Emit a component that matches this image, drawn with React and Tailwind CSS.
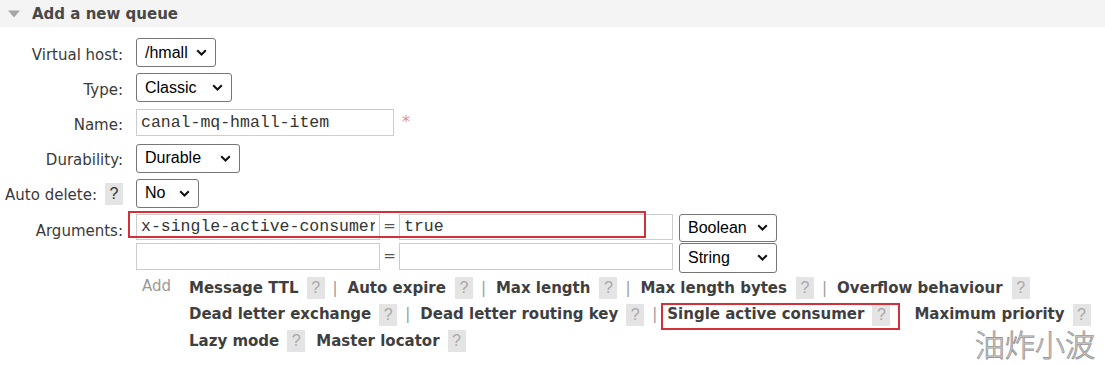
import React from "react";

// small chevron used by the fake selects
const Chevron = () => (
  <svg width="11" height="7" viewBox="0 0 11 7" className="shrink-0">
    <path d="M1.2 1.2l4.3 4.3 4.3-4.3" fill="none" stroke="#111" strokeWidth="2" />
  </svg>
);

const Select = ({ children, className = "" }) => (
  <div
    className={`flex items-center justify-between border border-[#767676] rounded-[3px] bg-white pl-[8px] pr-[8px] text-[16px] text-black font-['Liberation_Sans',Arial,sans-serif] ${className}`}
  >
    <span>{children}</span>
    <Chevron />
  </div>
);

const Help = ({ dark = false, className = "" }) => (
  <span
    className={`inline-flex items-center justify-center w-[18px] h-[22px] bg-[#e4e4e4] text-[16px] font-normal font-['Liberation_Sans',Arial,sans-serif] ${
      dark ? "text-[#333]" : "text-[#a8a8a8]"
    } ${className}`}
  >
    ?
  </span>
);

const Sep = () => <span className="ml-[8px] w-[5px] text-center font-normal text-[#999]">|</span>;

const Row = ({ label, children, className = "", align = "items-center" }) => (
  <div className={`flex ${align} ${className}`}>
    <div className="w-[123px] flex justify-end items-center pt-[5px] text-[#3a3a3a]">{label}</div>
    <div className={`ml-[13px] flex ${align}`}>{children}</div>
  </div>
);

const TextBox = ({ value = "", className = "" }) => (
  <input
    readOnly
    value={value}
    className={`border border-[#cccccc] bg-white px-[4px] outline-none text-[16.5px] text-[#333] font-['Liberation_Mono','Courier_New',monospace] ${className}`}
  />
);

export default function App() {
  return (
    <div className="relative w-[1105px] h-[366px] overflow-hidden bg-white text-[15px] text-[#444] font-['DejaVu_Sans',Verdana,sans-serif]">
      {/* section header */}
      <div className="flex items-center h-[27px] bg-[#f4f4f4]">
        <svg className="ml-[8px]" width="12" height="8" viewBox="0 0 12 8">
          <path d="M0 0.5h12L6 7.5z" fill="#a5a5a5" />
        </svg>
        <h2 className="ml-[12px] pt-[2px] font-bold text-[15px] text-[#484848]">Add a new queue</h2>
      </div>

      <div className="flex flex-col">
        <Row label="Virtual host:" className="mt-[11px]">
          <Select className="w-[80px] h-[29px]">/hmall</Select>
        </Row>
        <Row label="Type:" className="mt-[6px]">
          <Select className="w-[96px] h-[29px]">Classic</Select>
        </Row>
        <Row label="Name:" className="mt-[7px]" align="items-start">
          <TextBox value="canal-mq-hmall-item" className="w-[258px] h-[27px]" />
          <span className="ml-[8px] mt-[1px] text-[#ef8a8a] text-[16px]">*</span>
        </Row>
        <Row label="Durability:" className="mt-[7px]">
          <Select className="w-[104px] h-[29px]">Durable</Select>
        </Row>
        <Row
          label={
            <>
              <span>Auto delete:</span>
              <Help dark className="ml-[8px] -mt-[4px]" />
            </>
          }
          className="mt-[6px]"
        >
          <Select className="w-[63px] h-[29px]">No</Select>
        </Row>

        <div className="flex items-start mt-[6px]">
          <div className="w-[123px] h-[26px] flex justify-end items-center pt-[9px] text-[#3a3a3a]">Arguments:</div>
          <div className="ml-[13px] flex flex-col">
            <div className="relative flex items-start">
              <TextBox value="x-single-active-consumer" className="w-[244px] h-[26px]" />
              <span className="w-[19px] h-[26px] flex items-center justify-center text-[#555]">=</span>
              <TextBox value="true" className="w-[274px] h-[26px]" />
              <Select className="ml-[6px] w-[98px] h-[28px]">Boolean</Select>
              <div className="absolute left-[-8px] top-[-3px] w-[518px] h-[27px] border-2 border-[#d3303a]" />
            </div>
            <div className="mt-[1px] flex items-start">
              <TextBox className="w-[244px] h-[27px]" />
              <span className="w-[19px] h-[27px] flex items-center justify-center text-[#555]">=</span>
              <TextBox className="w-[274px] h-[27px]" />
              <Select className="ml-[6px] w-[98px] h-[30px]">String</Select>
            </div>

            {/* argument shortcuts */}
            <div className="mt-[2px] flex pl-[6px]">
              <div className="w-[47px] h-[27px] flex items-center pb-[4px] text-[#999]">Add</div>
              <div className="flex flex-col font-bold text-[#3f3f3f]">
                <div className="flex items-center h-[27px]">
                  <span>Message TTL</span>
                  <Help className="ml-[8px]" />
                  <Sep />
                  <span className="ml-[10px]">Auto expire</span>
                  <Help className="ml-[9px]" />
                  <Sep />
                  <span className="ml-[10px]">Max length</span>
                  <Help className="ml-[9px]" />
                  <Sep />
                  <span className="ml-[10px]">Max length bytes</span>
                  <Help className="ml-[9px]" />
                  <Sep />
                  <span className="ml-[10px]">Overflow behaviour</span>
                  <Help className="ml-[9px]" />
                </div>
                <div className="flex items-center h-[26px]">
                  <span>Dead letter exchange</span>
                  <Help className="ml-[8px]" />
                  <Sep />
                  <span className="ml-[10px]">Dead letter routing key</span>
                  <Help className="ml-[8px]" />
                  <Sep />
                  <div className="relative ml-[10px] flex items-center h-[26px]">
                    <span>Single active consumer</span>
                    <Help className="ml-[8px]" />
                    <div className="absolute left-[-6px] right-[-10px] top-[1px] bottom-[-2px] border-2 border-[#d3303a]" />
                  </div>
                  <span className="ml-[24px]">Maximum priority</span>
                  <Help className="ml-[8px]" />
                </div>
                <div className="flex items-center h-[27px]">
                  <span>Lazy mode</span>
                  <Help className="ml-[8px]" />
                  <span className="ml-[11px]">Master locator</span>
                  <Help className="ml-[8px]" />
                </div>
              </div>
            </div>
          </div>
        </div>
      </div>

      {/* watermark */}
      <div className="absolute left-[975px] top-[328px] text-[30px] leading-[30px] text-[#f2f2f2] [-webkit-text-stroke:0.9px_#969696] font-['Noto_Sans_CJK_SC','Noto_Sans',sans-serif] font-light">
        油炸小波
      </div>
    </div>
  );
}
